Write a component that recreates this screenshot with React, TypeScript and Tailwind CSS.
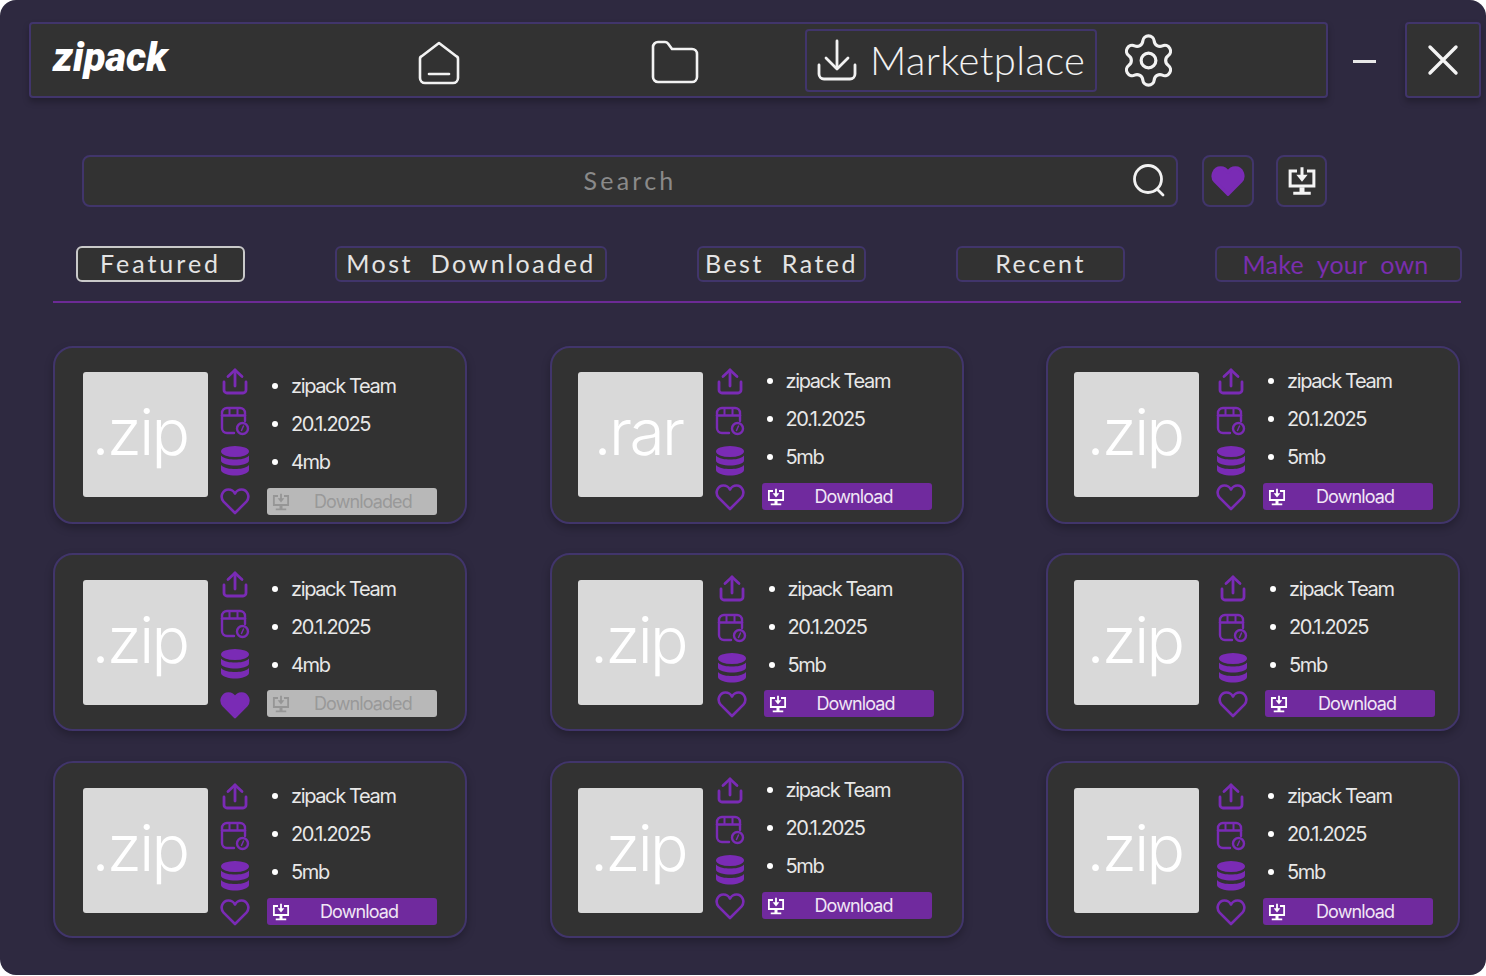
import { Settings } from "lucide-react";

type CardData = {
  ext: string;
  size: string;
  downloaded?: boolean;
  liked?: boolean;
  top: string;
  thumb: string;
  info: string;
  icons: string;
  heart: string;
  list: string;
  btn: string;
};

const cards: CardData[] = [
  { ext: ".zip", size: "4mb", downloaded: true, top: "h-[178px]", thumb: "ml-[28px] mt-[24px] pr-[12px]", info: "ml-[11px]", icons: "mt-[14px]", heart: "mt-[1px]", list: "mt-[19px]", btn: "mt-[7px]" },
  { ext: ".rar", size: "5mb", top: "h-[178px]", thumb: "ml-[26px] mt-[24px] pr-[4px]", info: "ml-[11px]", icons: "mt-[14px]", heart: "-mt-[3px]", list: "mt-[14px]", btn: "mt-[7px]" },
  { ext: ".zip", size: "5mb", top: "h-[178px]", thumb: "ml-[26px] mt-[24px] pr-[4px]", info: "ml-[16px]", icons: "mt-[14px]", heart: "-mt-[3px]", list: "mt-[14px]", btn: "mt-[7px]" },
  { ext: ".zip", size: "4mb", downloaded: true, liked: true, top: "h-[178px]", thumb: "ml-[28px] mt-[25px] pr-[12px]", info: "ml-[11px]", icons: "mt-[10px]", heart: "mt-[2px]", list: "mt-[15px]", btn: "mt-[6px]" },
  { ext: ".zip", size: "5mb", top: "h-[178px]", thumb: "ml-[26px] mt-[25px] pr-[4px]", info: "ml-[13px]", icons: "mt-[14px]", heart: "-mt-[3px]", list: "mt-[15px]", btn: "mt-[6px]" },
  { ext: ".zip", size: "5mb", top: "h-[178px]", thumb: "ml-[26px] mt-[25px] pr-[4px]", info: "ml-[18px]", icons: "mt-[14px]", heart: "-mt-[3px]", list: "mt-[15px]", btn: "mt-[6px]" },
  { ext: ".zip", size: "5mb", top: "mt-[1px] h-[177px]", thumb: "ml-[28px] mt-[25px] pr-[12px]", info: "ml-[11px]", icons: "mt-[14px]", heart: "-mt-[3px]", list: "mt-[14px]", btn: "mt-[7px]" },
  { ext: ".zip", size: "5mb", top: "mt-[1px] h-[177px]", thumb: "ml-[26px] mt-[25px] pr-[4px]", info: "ml-[11px]", icons: "mt-[8px]", heart: "-mt-[3px]", list: "mt-[8px]", btn: "mt-[7px]" },
  { ext: ".zip", size: "5mb", top: "mt-[1px] h-[177px]", thumb: "ml-[26px] mt-[25px] pr-[4px]", info: "ml-[16px]", icons: "mt-[14px]", heart: "-mt-[3px]", list: "mt-[14px]", btn: "mt-[7px]" },
];

function HomeIcon() {
  return (
    <svg width="44" height="44" viewBox="0 0 44 44" fill="none" stroke="#f2f2f2" strokeWidth="2.6" strokeLinejoin="round" strokeLinecap="round">
      <path d="M22 2 L39 15 a3 3 0 0 1 2 3 V37 a5 5 0 0 1 -5 5 H8 a5 5 0 0 1 -5 -5 V18 a3 3 0 0 1 2 -3 Z" />
      <path d="M12 33 H32" />
    </svg>
  );
}

function FolderIcon() {
  return (
    <svg width="48" height="44" viewBox="0 0 48 44" fill="none" stroke="#f2f2f2" strokeWidth="2.6" strokeLinejoin="round">
      <path d="M2 7 a5 5 0 0 1 5 -5 H14 a4 4 0 0 1 3 1.5 L21 9 H41 a5 5 0 0 1 5 5 V37 a5 5 0 0 1 -5 5 H7 a5 5 0 0 1 -5 -5 Z" />
    </svg>
  );
}

function TrayDownIcon() {
  return (
    <svg width="40" height="42" viewBox="0 0 40 42" fill="none" stroke="#f2f2f2" strokeWidth="2.8" strokeLinecap="round" strokeLinejoin="round">
      <path d="M20 2 V29" />
      <path d="M9 19 L20 30 L31 19" />
      <path d="M2 26 V35 a5 5 0 0 0 5 5 H33 a5 5 0 0 0 5 -5 V26" />
    </svg>
  );
}

function SearchIcon() {
  return (
    <svg width="34" height="34" viewBox="0 0 34 34" fill="none" stroke="#f2f2f2" strokeWidth="2.8" strokeLinecap="round">
      <circle cx="16" cy="16" r="13.5" />
      <path d="M26 27 L31 32" />
    </svg>
  );
}

function DesktopDownload({ color, size }: { color: string; size: number }) {
  return (
    <svg width={size} height={size} viewBox="0 0 24 24" fill="none">
      <path d="M8 4 H2.5 V16 H21.5 V4 H16" stroke={color} strokeWidth="2.4" />
      <path d="M12 1 V8" stroke={color} strokeWidth="2.4" />
      <path d="M7.5 7 H16.5 L12 12.5 Z" fill={color} />
      <path d="M10 17 V20.5 H5 V23 H19 V20.5 H14 V17 Z" fill={color} />
    </svg>
  );
}

function UploadIcon() {
  return (
    <svg width="26" height="27" viewBox="0 0 26 27" fill="none" stroke="#7a2bb5" strokeWidth="2.8" strokeLinecap="round" strokeLinejoin="round">
      <path d="M13 18 V2" />
      <path d="M6 8.5 L13 2 L20 8.5" />
      <path d="M2 14 V22 a3 3 0 0 0 3 3 H21 a3 3 0 0 0 3 -3 V14" />
    </svg>
  );
}

function CalendarIcon() {
  return (
    <svg width="30" height="30" viewBox="0 0 30 30" fill="none" stroke="#7a2bb5" strokeWidth="2.4" strokeLinecap="round">
      <path d="M14 27 H7 a5 5 0 0 1 -5 -5 V7 a5 5 0 0 1 5 -5 H20 a5 5 0 0 1 5 5 V15" />
      <path d="M2 9.5 H25" />
      <path d="M9.5 3 V9 M17.5 3 V9" strokeWidth="2" />
      <circle cx="22.5" cy="22.5" r="5.5" fill="#323232" />
      <path d="M23.5 20 L21.5 24.5" strokeWidth="1.5" />
    </svg>
  );
}

function DatabaseIcon() {
  return (
    <svg width="30" height="30" viewBox="0 0 30 30" fill="#7a2bb5">
      <ellipse cx="15" cy="5.5" rx="14" ry="5.5" />
      <path d="M1 9.5 C4 13 10 13.5 15 13.5 C20 13.5 26 13 29 9.5 V14.5 C29 18 21 19.5 15 19.5 C9 19.5 1 18 1 14.5 Z" />
      <path d="M1 19 C4 22.5 10 23 15 23 C20 23 26 22.5 29 19 V24 C29 27.5 21 29.5 15 29.5 C9 29.5 1 27.5 1 24 Z" />
    </svg>
  );
}

function HeartIcon({ filled, size = 30 }: { filled?: boolean; size?: number }) {
  return (
    <svg width={size} height={(size * 28) / 30} viewBox="0 0 30 28" fill={filled ? "#7a2bb5" : "none"} stroke="#7a2bb5" strokeWidth="2.6" strokeLinejoin="round">
      <path d="M15 26 L3.6 14.6 C-0.5 10 2.5 2.5 8.5 2.5 C11 2.5 13.5 3.8 15 6.5 C16.5 3.8 19 2.5 21.5 2.5 C27.5 2.5 30.5 10 26.4 14.6 Z" />
    </svg>
  );
}

function Card({ card }: { card: CardData }) {
  return (
    <div className={`${card.top} flex w-[414px] items-start rounded-[20px] border-2 border-[#41356b] bg-[#323232] shadow-[0_4px_8px_rgba(0,0,0,0.25)]`}>
      <div className={`${card.thumb} flex h-[125px] w-[125px] shrink-0 items-center justify-center rounded-[3px] bg-[#d9d9d9] pb-[6px] text-[64px] font-light tracking-[-0.04em] text-white [font-family:Inter,sans-serif]`}>
        {card.ext}
      </div>
      <div className={`${card.info} flex`}>
        <div className={`${card.icons} flex w-[32px] flex-col items-center`}>
          <div className="flex h-[39px] items-center justify-center"><UploadIcon /></div>
          <div className="flex h-[40px] items-center justify-center"><CalendarIcon /></div>
          <div className="flex h-[39px] items-center justify-center"><DatabaseIcon /></div>
          <div className={`${card.heart} flex h-[39px] items-center justify-center`}><HeartIcon filled={card.liked} /></div>
        </div>
        <div className={`${card.list} ml-[16px] flex w-[170px] flex-col text-[20px] tracking-[-0.068em] text-[#e8e8e8] [font-family:Inter,sans-serif]`}>
          {["zipack Team", "20.1.2025", card.size].map((row) => (
            <div key={row} className="flex h-[38px] items-center pl-[5px]">
              <span className="mr-[13px] h-[6px] w-[6px] rounded-full bg-white" />
              {row}
            </div>
          ))}
          {card.downloaded ? (
            <div className={`${card.btn} flex h-[27px] items-center rounded-[3px] bg-[#b8b8b8] pl-[5px] text-[#999999]`}>
              <DesktopDownload color="#969696" size={18} />
              <span className="ml-[24px] text-[18px] tracking-[-0.05em]">Downloaded</span>
            </div>
          ) : (
            <div className={`${card.btn} flex h-[27px] items-center rounded-[3px] bg-[#702a9e] pl-[5px] text-[#f0e6f5]`}>
              <DesktopDownload color="#ffffff" size={18} />
              <span className="ml-[30px] text-[18px] tracking-[-0.05em]">Download</span>
            </div>
          )}
        </div>
      </div>
    </div>
  );
}

const tabClass = "flex h-[36px] items-center justify-center rounded-[6px] border-2 bg-[#323232]";
const tabText = "border-[#41356b] pb-[1px] text-[25px] tracking-[0.1em] text-[#e4e4e4]";

export default function App() {
  return (
    <div className="h-[976px] w-[1486px] overflow-hidden bg-white [font-family:Lato,sans-serif]">
      <div className="flex h-[975px] flex-col rounded-[16px] bg-[#2e2940] pt-[22px]">
        <div className="ml-[29px] flex items-start">
          <div className="flex h-[76px] w-[1299px] items-center rounded-[4px] border-2 border-[#41356b] bg-[#323232] shadow-[0_4px_6px_rgba(0,0,0,0.25)]">
            <div className="ml-[22px] mb-[4px] w-[364px] text-[40px] leading-none font-black text-white italic [font-family:Roboto,sans-serif]">zipack</div>
            <div className="mt-[6px]"><HomeIcon /></div>
            <div className="ml-[190px] mt-[4px]"><FolderIcon /></div>
            <div className="ml-[106px] flex h-[63px] w-[292px] items-center rounded-[4px] border-2 border-[#41356b] pl-[10px]">
              <TrayDownIcon />
              <span className="ml-[13px] text-[40px] leading-none font-light tracking-[0.01em] text-[#f2f2f2]">Marketplace</span>
            </div>
            <Settings className="ml-[22px] h-[59px] w-[59px] text-[#f2f2f2]" strokeWidth={1.3} />
          </div>
          <div className="ml-[25px] mt-[38px] h-[3px] w-[23px] bg-[#e8e8e8]" />
          <div className="ml-[29px] flex h-[76px] w-[76px] items-center justify-center rounded-[4px] border-2 border-[#41356b] bg-[#323232] shadow-[0_4px_6px_rgba(0,0,0,0.25)]">
            <svg width="32" height="32" viewBox="0 0 32 32" stroke="#f4f4f4" strokeWidth="3.4" strokeLinecap="round">
              <path d="M3 3 L29 29 M29 3 L3 29" />
            </svg>
          </div>
        </div>

        <div className="ml-[82px] mt-[57px] flex items-center">
          <div className="relative flex h-[52px] w-[1096px] items-center justify-center rounded-[8px] border-2 border-[#41356b] bg-[#323232] text-[25px] tracking-[0.13em] text-[#8a8a8a]">
            <span>Search</span>
            <span className="absolute right-[10px] top-[6px]"><SearchIcon /></span>
          </div>
          <div className="ml-[24px] flex h-[52px] w-[52px] items-center justify-center rounded-[8px] border-2 border-[#41356b] bg-[#323232]">
            <HeartIcon filled size={34} />
          </div>
          <div className="ml-[22px] flex h-[52px] w-[51px] items-center justify-center rounded-[8px] border-2 border-[#41356b] bg-[#323232]">
            <DesktopDownload color="#f4f4f4" size={30} />
          </div>
        </div>

        <div className="ml-[76px] mt-[39px] flex">
          <div className={`${tabClass} w-[169px] border-[#c9c9c9] pb-[1px] text-[25px] tracking-[0.12em] text-[#e4e4e4]`}>Featured</div>
          <div className={`${tabClass} ${tabText} ml-[90px] w-[272px]`}>Most&nbsp; Downloaded</div>
          <div className={`${tabClass} ${tabText} ml-[90px] w-[169px]`}>Best&nbsp; Rated</div>
          <div className={`${tabClass} ${tabText} ml-[90px] w-[169px]`}>Recent</div>
          <div className={`${tabClass} ml-[90px] w-[247px] border-[#41356b] pt-[2px] pr-[6px] text-[25px] tracking-[0.01em] text-[#7a2eae]`}>Make&nbsp; your&nbsp; own</div>
        </div>

        <div className="ml-[53px] mt-[19px] h-[2px] w-[1408px] bg-[#6c2a96]" />

        <div className="ml-[53px] mt-[43px] grid w-[1408px] grid-cols-[414px_414px_414px] gap-x-[82.5px] gap-y-[29px]">
          {cards.map((card, i) => (
            <Card key={i} card={card} />
          ))}
        </div>
      </div>
    </div>
  );
}
